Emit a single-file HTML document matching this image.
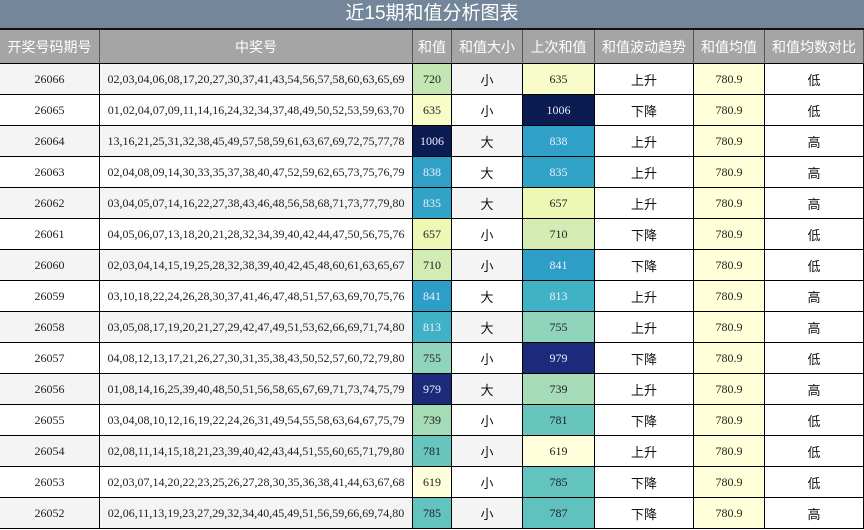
<!DOCTYPE html><html><head><meta charset="utf-8"><style>
*{margin:0;padding:0;box-sizing:border-box}
body{width:864px;height:530px;overflow:hidden;background:#fff;font-family:"Liberation Serif","Noto Sans CJK SC",serif;position:relative}
.t{position:absolute;left:0;top:0;width:864px;height:28px;background:#74879a;color:#fff;font:19px "Liberation Sans","Noto Sans CJK SC",sans-serif;text-align:center;line-height:28px;border-bottom:2px solid #111;height:30px}
.c{position:absolute;display:flex;align-items:center;justify-content:center;border-right:1px solid #000;border-bottom:1px solid #000;font-size:12px;color:#222;white-space:nowrap}
.h{background:#a5a5a5;color:#fff;font:14px "Liberation Sans","Noto Sans CJK SC",sans-serif;border-right:1px solid #555;border-bottom:1px solid #000}
.z{font-family:"Liberation Sans","Noto Sans CJK SC",sans-serif;font-size:13px;color:#111}
.w{color:#eef}
</style></head><body>
<div class="t">近15期和值分析图表</div>
<div id="g"></div>
<script>
var X=[0,100,413,452,523,595,694,765,864];
var H=["开奖号码期号","中奖号","和值","和值大小","上次和值","和值波动趋势","和值均值","和值均数对比"];
var R=[
["26066","02,03,04,06,08,17,20,27,30,37,41,43,54,56,57,58,60,63,65,69",720,"小",635,"上升","低"],
["26065","01,02,04,07,09,11,14,16,24,32,34,37,48,49,50,52,53,59,63,70",635,"小",1006,"下降","低"],
["26064","13,16,21,25,31,32,38,45,49,57,58,59,61,63,67,69,72,75,77,78",1006,"大",838,"上升","高"],
["26063","02,04,08,09,14,30,33,35,37,38,40,47,52,59,62,65,73,75,76,79",838,"大",835,"上升","高"],
["26062","03,04,05,07,14,16,22,27,38,43,46,48,56,58,68,71,73,77,79,80",835,"大",657,"上升","高"],
["26061","04,05,06,07,13,18,20,21,28,32,34,39,40,42,44,47,50,56,75,76",657,"小",710,"下降","低"],
["26060","02,03,04,14,15,19,25,28,32,38,39,40,42,45,48,60,61,63,65,67",710,"小",841,"下降","低"],
["26059","03,10,18,22,24,26,28,30,37,41,46,47,48,51,57,63,69,70,75,76",841,"大",813,"上升","高"],
["26058","03,05,08,17,19,20,21,27,29,42,47,49,51,53,62,66,69,71,74,80",813,"大",755,"上升","高"],
["26057","04,08,12,13,17,21,26,27,30,31,35,38,43,50,52,57,60,72,79,80",755,"小",979,"下降","低"],
["26056","01,08,14,16,25,39,40,48,50,51,56,58,65,67,69,71,73,74,75,79",979,"大",739,"上升","高"],
["26055","03,04,08,10,12,16,19,22,24,26,31,49,54,55,58,63,64,67,75,79",739,"小",781,"下降","低"],
["26054","02,08,11,14,15,18,21,23,39,40,42,43,44,51,55,60,65,71,79,80",781,"小",619,"上升","低"],
["26053","02,03,07,14,20,22,23,25,26,27,28,30,35,36,38,41,44,63,67,68",619,"小",785,"下降","低"],
["26052","02,06,11,13,19,23,27,29,32,34,40,45,49,51,56,59,66,69,74,80",785,"小",787,"下降","高"]];
var C={1006:"#0a1c52",979:"#1b2a7a",841:"#2c9ec7",838:"#2fa0c8",835:"#31a3c6",813:"#3fb2c5",787:"#60c2bf",785:"#62c3bf",781:"#67c5be",755:"#90d4bc",739:"#a5dbb6",720:"#c3e6b3",710:"#d2ecb3",657:"#eef8b5",635:"#f8fcc9",619:"#ffffdb"};
var s="";
function cell(i,y,h,cls,bg,txt){s+='<div class="c '+cls+'" style="left:'+X[i]+'px;top:'+y+'px;width:'+(X[i+1]-X[i])+'px;height:'+h+'px;'+(bg?'background:'+bg+';':'')+'">'+txt+'</div>';}
for(var i=0;i<8;i++)cell(i,30,34,"h","",H[i]);
for(var r=0;r<15;r++){var y=64+r*31,b=r%2?"#fff":"#f4f4f4",d=R[r];
cell(0,y,31,"",b,d[0]);cell(1,y,31,"",b,d[1]);
cell(2,y,31,d[2]>=800?"w":"",C[d[2]],d[2]);
cell(3,y,31,"z",b,d[3]);
cell(4,y,31,d[4]>=800?"w":"",C[d[4]],d[4]);
cell(5,y,31,"z","#fff",d[5]);
cell(6,y,31,"","#ffffd9","780.9");
cell(7,y,31,"z","#fff",d[6]);}
document.getElementById("g").innerHTML=s;
</script>
</body></html>
